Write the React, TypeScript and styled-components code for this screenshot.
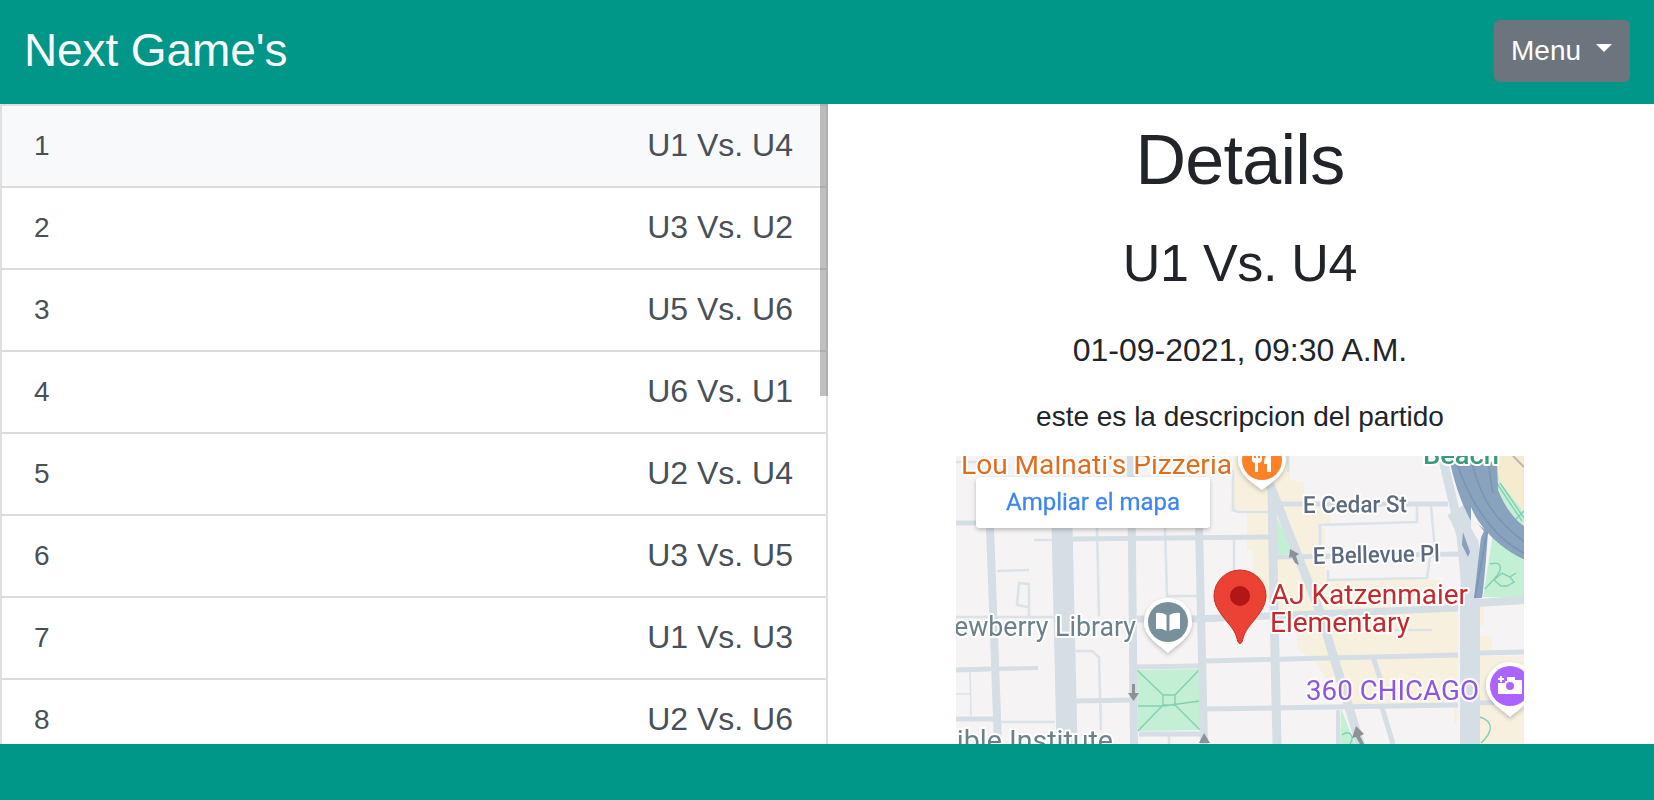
import React from 'react';
import styled, { createGlobalStyle } from 'styled-components';

const Reset = createGlobalStyle`
  *, *::before, *::after { box-sizing: border-box; }
  body {
    margin: 0;
    background: #fff;
    color: #212529;
    font-family: "Liberation Sans", Arial, sans-serif;
    font-size: 28px;
    line-height: 1.5;
  }
`;

const Page = styled.div`
  display: grid;
  grid-template-rows: 104px 640px 56px;
  height: 800px;
  overflow: hidden;
`;

const Header = styled.header`
  display: flex;
  align-items: center;
  justify-content: space-between;
  padding: 0 24px;
  background: #009688;
`;

const Brand = styled.span`
  color: #f8f9fa;
  font-size: 46px;
  letter-spacing: -0.1px;
  line-height: 69px;
  padding-bottom: 4px;
`;

const MenuButton = styled.button`
  display: flex;
  align-items: center;
  width: 136px;
  height: 62px;
  margin-bottom: 2px;
  padding: 0 0 1px 17px;
  border: 0;
  border-radius: 6px;
  background: #6c757d;
  color: #fff;
  font: inherit;
`;

const Caret = styled.span`
  margin: 0 0 5px 15px;
  border-top: 8px solid #fff;
  border-left: 8px solid transparent;
  border-right: 8px solid transparent;
`;

const Main = styled.main`
  display: flex;
  min-height: 0;
`;

const ListPane = styled.section`
  position: relative;
  width: 828px;
  overflow: hidden;
`;

const GameList = styled.div`
  display: flex;
  flex-direction: column;
  border: 2px solid #dfdfdf;
`;

const GameRow = styled.div<{ $active?: boolean }>`
  display: flex;
  align-items: center;
  justify-content: space-between;
  flex: none;
  height: 82px;
  padding: 0 33px 0 32px;
  border-bottom: 2px solid #dcdcdd;
  background: ${(p) => (p.$active ? '#f8f9fa' : '#fff')};
  color: #495057;
`;

const GameName = styled.span`
  padding-bottom: 2px;
  font-size: 32px;
`;

const ScrollThumb = styled.div`
  position: absolute;
  top: 0;
  right: 0;
  width: 8px;
  height: 292px;
  background: rgba(128, 128, 128, 0.5);
`;

const Details = styled.section`
  display: flex;
  flex: 1;
  flex-direction: column;
  align-items: center;
  overflow: hidden;
  padding: 14px 2px 0 0;
`;

const Title = styled.h1`
  margin: 0 0 14px;
  font-size: 70px;
  font-weight: 400;
  letter-spacing: -0.7px;
  line-height: 84px;
`;

const MatchName = styled.h2`
  margin: 16px 0 29px;
  font-size: 52px;
  font-weight: 400;
  letter-spacing: -0.3px;
  line-height: 62px;
`;

const DateLine = styled.p`
  margin: 3px 0 22px;
  font-size: 32px;
  line-height: 48px;
`;

const Description = styled.p`
  margin: 0 0 18px;
  line-height: 42px;
`;

const MapView = styled.svg`
  display: block;
  flex: none;
  width: 568px;
  height: 288px;
  font-family: Roboto, sans-serif;
`;

const Label = styled.text`
  paint-order: stroke;
  stroke: #fff;
  stroke-width: 4px;
  stroke-linejoin: round;
`;

const games = [
  'U1 Vs. U4', 'U3 Vs. U2', 'U5 Vs. U6', 'U6 Vs. U1',
  'U2 Vs. U4', 'U3 Vs. U5', 'U1 Vs. U3', 'U2 Vs. U6',
];

const StreetMap = () => (
  <MapView viewBox="956 456 568 288">
    <defs>
      <filter id="soft" x="0" y="0" width="100%" height="100%">
        <feGaussianBlur stdDeviation="0.6" />
      </filter>
      <filter id="shade" x="-20%" y="-30%" width="140%" height="170%">
        <feDropShadow dx="0" dy="2" stdDeviation="2" floodColor="#000" floodOpacity="0.24" />
      </filter>
    </defs>
    <rect x="956" y="456" width="568" height="288" fill="#f5f3f4" />
    <g filter="url(#soft)">
      {/* commercial blocks */}
      <g fill="#f7f0df">
        <path d="M1234 456H1290V480L1304 482V500H1320V528H1325V578H1352L1440 580V610L1458 612V655L1457 724H1454V707H1345L1313 659L1297 650V612H1278V600H1253V550H1247V512H1230Z" />
        <path d="M1480 607H1484V625H1480ZM1480 636H1492V652H1480ZM1480 656H1524V744H1480Z" />
      </g>
      <path d="M1277 509H1330V524H1320V580H1277Z" fill="#f7f0df" />
      <path d="M1329 526L1416 522V506H1446L1462 550V578L1428 580L1329 578Z" fill="#f5f3f4" />
      {/* parks */}
      <g fill="#c3f0d4">
        <path d="M1496 462L1524 500V598L1483 597L1492 540Z" />
        <path d="M1277 518L1294 553L1277 555Z" />
        <path d="M1341 708L1355 744H1340Z" />
        <path d="M1137 670L1200 669V730L1138 731Z" />
      </g>
      {/* beach */}
      <path d="M1494 456H1524V512L1500 482Z" fill="#f7ebcf" />
      <path d="M1513 456L1524 467" stroke="#b9b9b3" strokeWidth="2" />
      <g fill="none" stroke="#83d0b5" strokeWidth="1.4">
        <path d="M1137 670L1163 695H1175L1200 669M1138 731L1163 705H1175L1200 730M1163 695V705M1175 695V705M1138 706H1163L1200 701" />
        <path d="M1500 483L1524 518M1496 482L1522 521M1503 532L1524 511M1490 564C1505 560 1501 572 1495 578L1485 589M1494 580L1502 573L1510 577L1514 582L1507 586H1501L1494 580M1510 577L1516 573M1480 717C1495 722 1492 733 1481 743M1342 735C1350 729 1355 737 1350 744" />
      </g>
      {/* alleys and service lanes */}
      <g fill="none" stroke="#dbe3e9" strokeWidth="2.6">
        <path d="M1034 540H1076M956 462H980M1097 528L1099 616M1165 528L1167 596H1197M997 571L1029 570M1029 616V584L1019 583L1017 605L1028 607" />
        <path d="M1076 651H1092L1099 657L1101 730M1234 540V616M1320 548V525L1417 522V506M1431 506L1435 550M1328 570V580L1427 578L1431 551M1233 470V510L1238 512H1270M1288 456V472" />
        <path d="M956 617H1073M1000 722H1055M1169 734V744M1395 630H1432M1372 655L1381 681" />
        <path d="M970 672L971 716M956 694H970" strokeWidth="1.6" />
      </g>
      {/* streets */}
      <g fill="none" stroke="#d5dee5" strokeWidth="5">
        <path d="M956 523H980M1073 539L1269 537M956 670L990 669M956 719H994M1075 701L1131 700M1205 661L1458 655M1480 653L1524 652M1207 709L1458 705M1480 703L1524 701M1277 504H1448M1277 557L1462 554M1137 667L1200 666M1139 734H1204" />
        <path d="M990 669L1038 668" strokeWidth="4" />
        <path d="M1137 619H1196M1196 619L1458 608" strokeWidth="7" />
        <path d="M1478 603L1524 600" strokeWidth="8" />
        <path d="M1381 704L1393 744M1373 657L1381 681" />
        <path d="M990 528L998 744" strokeWidth="8" />
        <path d="M1062 526L1067 744" strokeWidth="21" />
        <path d="M1131 456L1134 744M1199 528L1204 744" strokeWidth="8" />
        <path d="M1272 490L1274 610L1277 744M1268 480L1320 612L1362 750" strokeWidth="9" />
        <path d="M1338 710V744" strokeWidth="4" />
        <path d="M1443 460L1461 535L1468 610L1469 744" strokeWidth="9" />
        <path d="M1456 510C1469 531 1473 555 1470 595V744" strokeWidth="20" />
      </g>
      {/* expressway */}
      <path d="M1450 462H1497L1498 490C1505 507 1515 522 1530 530V562C1498 549 1478 525 1471 507V519L1488 532C1486 560 1484 585 1482 598H1474L1481 537C1465 514 1456 490 1450 462Z" fill="#89a2bd" />
      <path d="M1471 516L1484 531L1479 542L1471 528Z" fill="#f5f3f4" />
      <path d="M1463 532L1470 552L1468 557L1462 545Z" fill="#86a0bd" />
      <path d="M1457 463C1466 492 1489 536 1524 553M1472 463C1480 495 1493 520 1526 543M1488 462L1493 493M1487 532L1475 598" fill="none" stroke="#7895b4" strokeWidth="1.5" />
      {/* one-way arrows */}
      <g fill="#8c9298">
        <path d="M1132 684H1135V693H1139L1133.500 701L1128 693H1132Z" />
        <path d="M1204 733L1210 743H1199Z" />
        <path d="M1290 549L1299 554L1296 556L1299 565L1295 563L1292 557L1289 558Z" />
        <path d="M1356 726L1364 734L1360 736L1364 744H1360L1356 737L1352 738Z" />
      </g>
      {/* place labels */}
      <g fontSize="28">
        <Label x="961" y="474" textLength="271" lengthAdjust="spacingAndGlyphs" fill="#e06c1d">Lou Malnati's Pizzeria</Label>
        <Label x="954" y="636" textLength="182" lengthAdjust="spacingAndGlyphs" fill="#6a808b">ewberry Library</Label>
        <Label x="939" y="750" textLength="174" lengthAdjust="spacingAndGlyphs" fill="#6a808b">Bible Institute</Label>
        <Label x="1306" y="700" textLength="173" lengthAdjust="spacingAndGlyphs" fill="#9054df">360 CHICAGO</Label>
        <Label x="1423" y="464" textLength="76" lengthAdjust="spacingAndGlyphs" fontSize="26" fontWeight="500" fill="#3a9b77">Beach</Label>
        <g fill="#c5292b">
          <Label x="1271" y="604" textLength="197" lengthAdjust="spacingAndGlyphs">AJ Katzenmaier</Label>
          <Label x="1270" y="632" textLength="140" lengthAdjust="spacingAndGlyphs">Elementary</Label>
        </g>
        <g fill="#5b6b7e" fontSize="23.5" fontWeight="500">
          <Label x="1303" y="513" textLength="104" lengthAdjust="spacingAndGlyphs" transform="rotate(-0.5 1303 513)">E Cedar St</Label>
          <Label x="1313" y="564" textLength="127" lengthAdjust="spacingAndGlyphs" transform="rotate(-1.2 1313 564)">E Bellevue Pl</Label>
        </g>
      </g>
      {/* restaurant marker */}
      <g transform="translate(1262 461)">
        <path d="M0 29C-4 25-24 15-24-2A24 24 0 1 1 24-2C24 15 4 25 0 29Z" fill="#fff" filter="url(#shade)" />
        <circle cy="-1" r="20" fill="#ff8126" />
        <path d="M-10-9V-2Q-10 2-7 2V11H-4V2Q0 2 0-2V-9H-2V-3H-4V-9H-6V-3H-8V-9ZM9-9Q2-7 2 3H5V11H9Z" fill="#fff" />
      </g>
      {/* library marker */}
      <g transform="translate(1168 622)">
        <path d="M0 31C-4 26-24 16-24 0A24 24 0 1 1 24 0C24 16 4 26 0 31Z" fill="#fff" filter="url(#shade)" />
        <circle r="20" fill="#78909c" />
        <path d="M-12-9Q-6-10-1.500-7V9Q-6 6-12 7ZM12-9Q6-10 1.500-7V9Q6 6 12 7Z" fill="#fff" />
      </g>
      {/* viewpoint marker */}
      <g transform="translate(1510 686)">
        <path d="M0 31C-4 26-24 16-24 0A24 24 0 1 1 24 0C24 16 4 26 0 31Z" fill="#fff" filter="url(#shade)" />
        <circle r="20" fill="#ad64ff" />
        <path d="M-12 8V-3H-5V-5H-3V-9H5V-6H12V8Z" fill="#fff" />
        <path d="M-9-10V-4M-12-7H-6" stroke="#fff" strokeWidth="2" />
        <circle cy="0" r="4" fill="#ad64ff" />
      </g>
      {/* selected place */}
      <g transform="translate(1240 596)">
        <path d="M0 47.500C-3 47.500-2 42-6 35C-12 25-26 14-26 0A26 26 0 1 1 26 0C26 14 12 25 6 35C2 42 3 47.500 0 47.500Z" fill="#ea4335" stroke="#c92d25" strokeWidth="1" />
        <circle r="10" fill="#b31412" />
      </g>
      {/* enlarge link */}
      <rect x="976" y="477" width="234" height="51" rx="4" fill="#fff" filter="url(#shade)" />
      <text x="1006" y="510" textLength="174" lengthAdjust="spacingAndGlyphs" fontSize="24.500" fill="#3f86f0" stroke="#3f86f0" strokeWidth="0.3">Ampliar el mapa</text>
    </g>
  </MapView>
);

export default function App() {
  return (
    <>
      <Reset />
      <Page>
        <Header>
          <Brand>Next Game's</Brand>
          <MenuButton>Menu<Caret /></MenuButton>
        </Header>
        <Main>
          <ListPane>
            <GameList>
              {games.map((name, i) => (
                <GameRow key={name} $active={i === 0}>
                  <span>{i + 1}</span>
                  <GameName>{name}</GameName>
                </GameRow>
              ))}
            </GameList>
            <ScrollThumb />
          </ListPane>
          <Details>
            <Title>Details</Title>
            <MatchName>U1 Vs. U4</MatchName>
            <DateLine>01-09-2021, 09:30 A.M.</DateLine>
            <Description>este es la descripcion del partido</Description>
            <StreetMap />
          </Details>
        </Main>
        <Header as="footer" />
      </Page>
    </>
  );
}
